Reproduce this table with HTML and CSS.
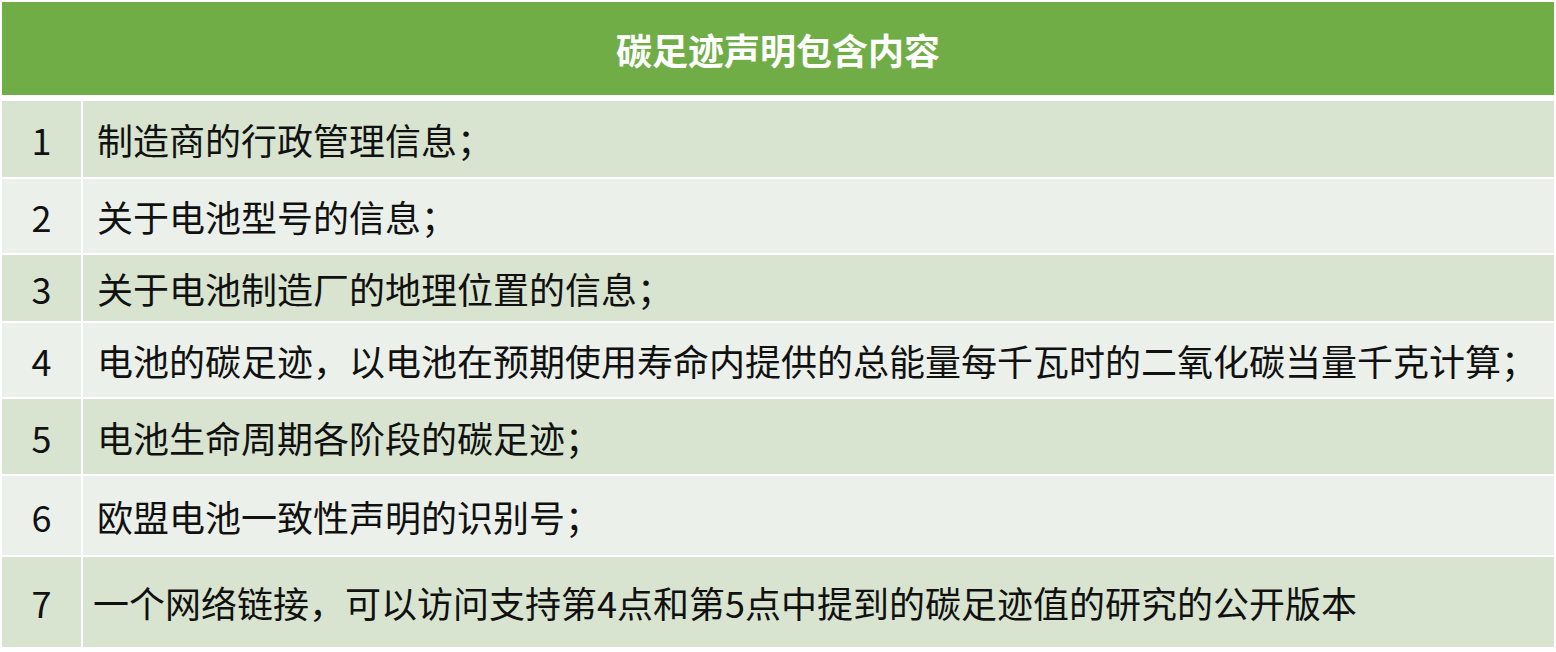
FILE: index.html
```html
<!DOCTYPE html>
<html lang="zh-CN">
<head>
<meta charset="utf-8">
<title>碳足迹声明包含内容</title>
<link rel="stylesheet" href="styles.css">
</head>
<body>
<div class="table">
  <div class="head">碳足迹声明包含内容</div>
  <div class="rows">
    <div class="num r1 odd">1</div><div class="txt r1 odd">制造商的行政管理信息；</div>
    <div class="num r2 even">2</div><div class="txt r2 even">关于电池型号的信息；</div>
    <div class="num r3 odd">3</div><div class="txt r3 odd">关于电池制造厂的地理位置的信息；</div>
    <div class="num r4 even">4</div><div class="txt r4 even">电池的碳足迹，以电池在预期使用寿命内提供的总能量每千瓦时的二氧化碳当量千克计算；</div>
    <div class="num r5 odd">5</div><div class="txt r5 odd">电池生命周期各阶段的碳足迹；</div>
    <div class="num r6 even">6</div><div class="txt r6 even">欧盟电池一致性声明的识别号；</div>
    <div class="num r7 odd">7</div><div class="txt r7 odd t7">一个网络链接，可以访问支持第4点和第5点中提到的碳足迹值的研究的公开版本</div>
  </div>
</div>
</body>
</html>
```
FILE: styles.css
```css
html, body {
  margin: 0;
  padding: 0;
  background: #ffffff;
}
body {
  width: 1556px;
  height: 652px;
  overflow: hidden;
  font-family: "Noto Sans CJK SC", "Noto Sans", sans-serif;
  color: #111111;
}
.table {
  padding: 2px 2px 0 2px;
}
.head {
  height: 93px;
  background: #70ad47;
  color: #ffffff;
  font-size: 36px;
  font-weight: 700;
  display: flex;
  align-items: center;
  justify-content: center;
  letter-spacing: 0;
}
.rows {
  margin-top: 6px;
  display: grid;
  grid-template-columns: 79px 1fr;
  grid-template-rows: 76px 74px 66px 74px 75px 79px 90px;
  column-gap: 2px;
  row-gap: 2px;
}
.odd { background: #d8e4d0; }
.even { background: #ebf0ea; }
.num, .txt {
  display: flex;
  align-items: center;
  font-size: 36px;
  line-height: 1;
  white-space: nowrap;
}
.num {
  justify-content: center;
}
.txt {
  padding-left: 14px;
}
.t7 {
  padding-left: 10px;
}
```
